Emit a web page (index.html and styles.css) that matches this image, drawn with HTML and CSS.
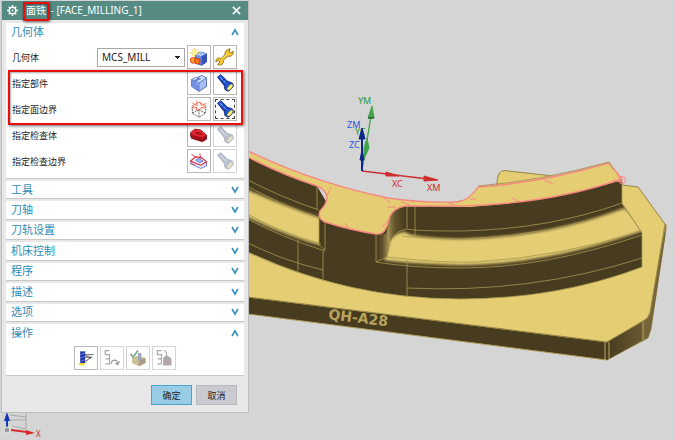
FILE: index.html
```
<!DOCTYPE html>
<html lang="zh-CN">
<head>
    <meta charset="UTF-8">
    <meta name="viewport" content="width=device-width, initial-scale=1.0">
    <title>面铣 - [FACE_MILLING_1]</title>
    <link rel="stylesheet" href="styles.css">
</head>
<body>
    <!-- Shared icons -->
    <svg class="sprite" aria-hidden="true">
        <symbol id="torch" viewBox="0 0 24 24">
            <path d="M3 5l4-3 8 8 6 2 1 4-6 6-4-2-1-5-4-5z" fill="#1b50cf" stroke="#0b1c6c"/>
            <path d="M6 5l8 8" stroke="#5f9bff" stroke-width="1.5"/>
            <path d="M11 14l4-4M8 11l3-4" stroke="#0b1c6c"/>
            <ellipse cx="18" cy="17" rx="2.5" ry="5" transform="rotate(42 18 17)" fill="#fff06a" stroke="#233f91"/>
        </symbol>
        <symbol id="torch-off" viewBox="0 0 24 24">
            <path d="M3 5l4-3 8 8 6 2 1 4-6 6-4-2-1-5-4-5z" fill="#b9becb" stroke="#adb1bc"/>
            <path d="M6 5l8 8" stroke="#d5dae6" stroke-width="1.5"/>
            <ellipse cx="18" cy="17" rx="2.5" ry="5" transform="rotate(42 18 17)" fill="#e2e0c6" stroke="#b9bbc0"/>
        </symbol>
        <symbol id="down" viewBox="0 0 8 8">
            <path d="M1 1l3 5 3-5" fill="none" stroke="#3c94bd" stroke-width="1.7"/>
        </symbol>
        <symbol id="up" viewBox="0 0 8 8">
            <path d="M1 7l3-5 3 5" fill="none" stroke="#3c94bd" stroke-width="1.7"/>
        </symbol>
    </svg>

    <!-- Graphics window -->
    <svg class="scene" viewBox="0 0 675 440" preserveAspectRatio="xMinYMin slice" role="img" aria-label="QH-A28">
        <defs>
            <filter id="soft" x="-10%" y="-20%" width="120%" height="140%"><feGaussianBlur stdDeviation="1.8"/></filter>
            <linearGradient id="fillet-in" x1="0" x2="1">
                <stop offset="0" stop-color="#483c20"/>
                <stop offset=".4" stop-color="#5d4f2b"/>
                <stop offset="1" stop-color="#cdb769"/>
            </linearGradient>
            <linearGradient id="fillet-out" x1="0" x2="1">
                <stop offset="0" stop-color="#9c8a4b"/>
                <stop offset=".4" stop-color="#62542d"/>
                <stop offset="1" stop-color="#483c20"/>
            </linearGradient>
            <linearGradient id="chamfer" x1="0" x2="1">
                <stop offset="0" stop-color="#483c20"/>
                <stop offset="1" stop-color="#6a5a31"/>
            </linearGradient>
            <clipPath id="ledges">
                <path d="M240 177Q282 198 319 210V247L325 251Q280 238 240 217Z"/>
                <path d="M622 204L642 233V236Q545 270 462 269Q410 268 376 263L387 240Q392 231 405 229L412 233Q440 236 462 236Q550 233 622 204Z"/>
            </clipPath>
        </defs>

        <!-- base plate -->
        <path d="M240 296L607 342L648 319L666 224V229L651 329L648 338L607 360L240 313Z" fill="#483c20" stroke="#ad9b55"/>
        <path d="M607 342L643 321V340L607 360Z" fill="url(#chamfer)"/>
        <path d="M643 321L648 318L666 224L665 238L651 329L648 338L643 340Z" fill="#74663a"/>
        <path d="M240 240V296L607 342L643 321Q648 319 650 313L665 224L638 187L553 176L508 171Q500 169 498 176L495 195Z" fill="#e5cd74" stroke="#958444"/>
        <path d="M605 342V360M609 342V359M643 322V340" stroke="#b9a65f" fill="none"/>

        <!-- part body -->
        <path d="M240 150L317 186L327 203L388 206L470 207Q550 201 622 180V204L642 233V267Q558 299 460 299Q345 299 240 248Z" fill="#483c20"/>
        <g clip-path="url(#ledges)">
            <path filter="url(#soft)" d="M230 182Q282 206 324 219L330 248Q280 235 230 208Z" fill="#e5cd74"/>
            <path filter="url(#soft)" d="M624 208L650 228Q548 265 462 265Q410 264 384 260L390 240Q396 232 405 232Q412 238 462 239Q550 237 624 208Z" fill="#e5cd74"/>
        </g>
        <path d="M376 234H386L389 222L392 238L387 257L376 262Z" fill="url(#fillet-in)"/>
        <path d="M388 222Q391 207 405 206V229Q394 232 390 242Z" fill="url(#fillet-out)"/>
        <path d="M622 203L642 233" fill="none" stroke="#9c8b4c"/>

        <!-- edges of the part -->
        <g fill="none" stroke="#a6974e" stroke-width=".8">
            <path d="M240 176Q282 198 319 210M240 182Q282 206 320 218M240 210Q280 233 321 244M240 215Q280 237 325 251M240 239Q280 260 323 270"/>
            <path d="M317 186V209M319 218V245L325 250M325 222V250M323 251V279M298 240V271"/>
            <path d="M376 233V262Q410 268 462 268Q545 268 642 235M376 262L387 257Q440 263 475 262Q560 257 642 231"/>
            <path d="M407 206V228M415 206V237M392 238Q396 231 407 229Q412 231 462 231Q550 229 622 203M402 236Q412 238 462 239Q550 236 625 209"/>
            <path d="M407 260V297M407 288Q530 294 642 258M622 180V203M642 233V267"/>
            <path d="M240 249Q345 299 460 299Q558 299 642 267"/>
        </g>

        <!-- machined face -->
        <path d="M240 147Q310 182 388 198Q420 203 457 202Q470 200 478 187Q540 183 609 163L622 179Q540 207 440 206L405 206Q394 208 390 216C387 226 386 235 376 234Q350 230 325 222Q317 218 320 211Q327 204 327 197Q325 189 317 186Q280 174 240 153Z" fill="#e5cd74" stroke="#f78882" stroke-width="1.4"/>
        <path d="M478 186Q540 181 609 162L614 170" fill="none" stroke="#aa9859"/>
        <g fill="none" stroke="#f78882">
            <path d="M331 188L326 197M384 198L391 203M387 207H396M345 223L350 230M388 221L382 227M401 202L410 205M447 202L454 205M512 198L520 202M543 179L553 184M470 199H476M613 180L622 182L617 174"/>
            <circle cx="622" cy="180" r="3.5"/>
        </g>
        <text class="engraving" transform="translate(328 319) rotate(7)">QH-A28</text>

        <!-- coordinate systems -->
        <g stroke="#43a34c" fill="#43a34c">
            <path d="M362 170L371 116" stroke-width="1.4"/>
            <path d="M372 106L368 118H374ZM367 138L364 148L364 159L369 148Z"/>
            <path d="M368 118H374" stroke="#143d19"/>
        </g>
        <g stroke="#cf2d2f" fill="#cf2d2f">
            <path d="M362 171L428 179" stroke-width="1.4"/>
            <path d="M438 180L424 176V181ZM399 176L386 172V176Z"/>
        </g>
        <g class="axis green">
            <text x="358" y="104">YM</text>
            <text x="355" y="135">YC</text>
        </g>
        <g stroke="#0d2789" fill="#0d2789">
            <path d="M362 171V130" stroke-width="2"/>
            <path d="M362 128L359 139H365ZM362 150L360 160H364Z"/>
        </g>
        <g class="axis blue">
            <text x="347" y="128">ZM</text>
            <text x="349" y="148">ZC</text>
        </g>
        <g class="axis red">
            <text x="392" y="187">XC</text>
            <text x="427" y="191">XM</text>
        </g>

        <!-- view triad -->
        <path d="M10 410L26 412V429L12 426M26 417L10 415M10 420H26" fill="none" stroke="#aaa"/>
        <path d="M7 429V415" stroke="#153cb8" stroke-width="2"/>
        <path d="M7 412L4 421H10Z" fill="#1237b5"/>
        <path d="M11 430L27 432" stroke="#d72a2c" stroke-width="2"/>
        <path d="M35 433L26 430V435Z" fill="#d72a2c"/>
        <circle cx="7" cy="430" r="3" fill="#999" stroke="#eee"/>
        <text class="triad-label" x="36" y="437">X</text>
    </svg>

    <form class="dialog">
        <header class="title-bar">
            <svg class="gear" viewBox="0 0 12 12">
                <circle cx="6" cy="6" r="3.6" fill="none" stroke="#fff" stroke-width="1.6"/>
                <path d="M6 0v2M6 10v2M0 6h2M10 6h2M2 2l1 1M9 9l1 1M10 2L9 3M3 9l-1 1" stroke="#fff" stroke-width="1.6"/>
                <circle cx="6" cy="6" r="1" fill="#fff"/>
            </svg>
            <h1><span class="operation">面铣</span> - [FACE_MILLING_1]</h1>
            <button type="button" class="close" aria-label="关闭">
                <svg viewBox="0 0 10 10"><path d="M1 1l8 8M9 1L1 9" stroke="#fff" stroke-width="1.8"/></svg>
            </button>
        </header>

        <section class="panel geometry">
            <h2>几何体 <svg class="arrow"><use href="#up"/></svg></h2>
            <div class="rows">
                <div class="row">
                    <label for="geometry">几何体</label>
                    <select id="geometry"><option>MCS_MILL</option></select>
                    <button type="button" class="tool" aria-label="新建几何体">
                        <svg viewBox="0 0 24 24">
                            <path d="M8 9l5-3 8 2v10l-6 4-7-3z" fill="#6d8de8" stroke="#223c9d"/>
                            <path d="M8 9l7 2 6-3-8-2z" fill="#a9c4fa"/><path d="M15 11v11l6-4V8z" fill="#3555bd"/>
                            <path d="M7 1v12M1 7h12M3 3l8 8M11 3l-8 8" stroke="#e3c02f"/>
                            <circle cx="7" cy="7" r="2.8" fill="#fff38a"/>
                            <circle cx="5" cy="16" r="3.5" fill="#ffa52c" stroke="#d83b0d"/>
                            <circle cx="10" cy="17" r="3.5" fill="#f67a1b" stroke="#c92f0a"/>
                        </svg>
                    </button>
                    <button type="button" class="tool" aria-label="编辑">
                        <svg viewBox="0 0 24 24">
                            <path d="M14 4l4-2-1 4 2 1 3-2c0 5-3 7-7 6l-5 5c1 4-3 7-7 5l3-3-2-2-3 2c0-5 4-6 6-4l5-5c0-2 0-4 2-5z" fill="#f4c52c" stroke="#8c6510"/>
                            <path d="M9 14l6-6" stroke="#fff09a"/>
                        </svg>
                    </button>
                </div>
                <div class="row">
                    <span class="name">指定部件</span>
                    <button type="button" class="tool" aria-label="指定部件">
                        <svg viewBox="0 0 24 24">
                            <path d="M3 8v8l9 6 9-6V6l-6-3-4 2v4l-3 1V6z" fill="#86a3ec" stroke="#4056a5"/>
                            <path d="M3 8l5-3 3 1v4l-3 1v3l4 2v6l-9-6z" fill="#7391e2"/>
                            <path d="M3 8l5-3 3 1-4 3zM11 5l4-2 6 3-9 6-4-2 6-3z" fill="#cfdeff" stroke="#5069b8" stroke-width=".7"/>
                            <path d="M12 12l9-6v10l-9 6z" fill="#a5bdf4" stroke="#5069b8" stroke-width=".7"/>
                        </svg>
                    </button>
                    <button type="button" class="tool" aria-label="显示部件"><svg><use href="#torch"/></svg></button>
                </div>
                <div class="row">
                    <span class="name">指定面边界</span>
                    <button type="button" class="tool" aria-label="指定面边界">
                        <svg viewBox="0 0 24 24">
                            <path d="M4 9v8l8 5 8-5V9M12 13v9M4 17l8-4 8 4" fill="none" stroke="#444" stroke-dasharray="2 1"/>
                            <path d="M4 8l8-4 8 4-8 5zM4 5l6 3-1-6M13 3l2 5 6-3M3 11l6-1v4M20 11l-6-1" fill="none" stroke="#ef6a50"/>
                        </svg>
                    </button>
                    <button type="button" class="tool focused" aria-label="显示面边界"><svg><use href="#torch"/></svg></button>
                </div>
                <div class="row">
                    <span class="name">指定检查体</span>
                    <button type="button" class="tool" aria-label="指定检查体">
                        <svg viewBox="0 0 24 24">
                            <path d="M2 9l5-4 7 1 7 6v5l-5 3-13-4-1-3z" fill="#a70d17" stroke="#740812"/>
                            <path d="M2 9l5-4 7 1 7 6-5 3-12-3z" fill="#db2630"/>
                            <path d="M8 8l5 1 4 2-4 1-5-2z" fill="#ad101b"/>
                        </svg>
                    </button>
                    <button type="button" class="tool off" aria-label="显示检查体" disabled><svg><use href="#torch-off"/></svg></button>
                </div>
                <div class="row">
                    <span class="name">指定检查边界</span>
                    <button type="button" class="tool" aria-label="指定检查边界">
                        <svg viewBox="0 0 24 24">
                            <path d="M2 12v3l12 6 7-3v-5" fill="#dce6ff" stroke="#5871d2"/>
                            <path d="M2 12l6-5 7 1 6 5-7 4z" fill="#fff" stroke="#d92836" stroke-width="1.4"/>
                            <path d="M8 11l4-2 5 3-4 2z" fill="#a8bfff" stroke="#4966dd"/>
                            <path d="M3 4l6 4M13 3l1 6M2 15l5 2" stroke="#d92836"/>
                        </svg>
                    </button>
                    <button type="button" class="tool off" aria-label="显示检查边界" disabled><svg><use href="#torch-off"/></svg></button>
                </div>
            </div>
        </section>

        <div class="collapsed">
            <section class="panel"><h2>工具 <svg class="arrow"><use href="#down"/></svg></h2></section>
            <section class="panel"><h2>刀轴 <svg class="arrow"><use href="#down"/></svg></h2></section>
            <section class="panel"><h2>刀轨设置 <svg class="arrow"><use href="#down"/></svg></h2></section>
            <section class="panel"><h2>机床控制 <svg class="arrow"><use href="#down"/></svg></h2></section>
            <section class="panel"><h2>程序 <svg class="arrow"><use href="#down"/></svg></h2></section>
            <section class="panel"><h2>描述 <svg class="arrow"><use href="#down"/></svg></h2></section>
            <section class="panel"><h2>选项 <svg class="arrow"><use href="#down"/></svg></h2></section>
        </div>

        <section class="panel">
            <h2>操作 <svg class="arrow"><use href="#up"/></svg></h2>
            <div class="actions">
                <button type="button" class="tool" aria-label="生成">
                    <svg viewBox="0 0 24 24">
                        <path d="M2 18h10l-3 3H5z" fill="#f2db39"/>
                        <path d="M5 4h6v14H5z" fill="#2435aa"/>
                        <path d="M5 8l6-2M5 12l6-2M5 16l6-2" stroke="#6c82dc"/>
                        <path d="M11 8h10M11 11h8l-8 5M11 9l7 3" fill="none" stroke="#444"/>
                    </svg>
                </button>
                <button type="button" class="tool off" aria-label="重播" disabled>
                    <svg viewBox="0 0 24 24">
                        <path d="M9 3H4v5h5v5H4M4 13v0M9 13v6H4" fill="none" stroke="#aaa" stroke-width="1.5"/>
                        <path d="M11 19c1-6 7-6 8 0M16 18l3 2 2-4" fill="none" stroke="#999" stroke-width="1.5"/>
                    </svg>
                </button>
                <button type="button" class="tool off" aria-label="确认" disabled>
                    <svg viewBox="0 0 24 24">
                        <path d="M5 12l7-3 9 3v6l-8 4-8-4z" fill="#cbbf93"/>
                        <path d="M13 14l8-2v6l-8 4z" fill="#ab9d87"/>
                        <path d="M12 6h4v9h-4z" fill="#a0a3bd"/>
                        <path d="M3 7l3 4 6-8" fill="none" stroke="#73a889" stroke-width="2"/>
                    </svg>
                </button>
                <button type="button" class="tool off" aria-label="列表" disabled>
                    <svg viewBox="0 0 24 24">
                        <path d="M9 3H4v5h5v5H4M9 13v6H4" fill="none" stroke="#aaa" stroke-width="1.5"/>
                        <path d="M11 12l4-4 6 5v8H11z" fill="#aaa"/>
                        <path d="M12 3c3 0 3 3 3 6M13 15h6M13 18h6" fill="none" stroke="#c49c9c" stroke-width="1.3"/>
                    </svg>
                </button>
            </div>
        </section>

        <footer class="buttons">
            <button type="submit" class="ok">确定</button>
            <button type="button">取消</button>
        </footer>

        <div class="mark mark-title"></div>
        <div class="mark mark-rows"></div>
    </form>
</body>
</html>
```
FILE: styles.css
```
* {
    box-sizing: border-box;
}

body {
    margin: 0;
    padding: 1px;
    min-height: 100vh;
    background-color: #d5d5d5;
    font-family: "Noto Sans", "Noto Sans CJK SC", sans-serif;
    font-size: 9px;
    color: #222;
    overflow: hidden;
}

button, select {
    font: inherit;
    color: inherit;
    margin: 0;
    padding: 0;
}

.sprite {
    position: absolute;
    width: 0;
    height: 0;
}

/* Graphics window */
.scene {
    position: absolute;
    top: 0;
    left: 0;
    width: 100%;
    height: 100%;
}

.axis {
    font-size: 9px;
}

.green { fill: #2c9b36; }
.blue { fill: #2456df; }
.red { fill: #cf2d2f; }

.triad-label {
    font-size: 8px;
    fill: #d72a2c;
}

.engraving {
    font-family: "DejaVu Sans", sans-serif;
    font-size: 14px;
    font-weight: bold;
    fill: #b9a45b;
}

/* Dialog */
.dialog {
    position: relative;
    width: 248px;
    padding: 0 4px 7px;
    background-color: #e8e8e8;
    border: 1px solid #bdbdbd;
    border-top: none;
}

.title-bar {
    display: flex;
    align-items: center;
    gap: 8px;
    height: 19px;
    margin: 0 -4px 3px;
    padding: 0 7px 0 5px;
    background-color: #568b83;
    color: #fff;
}

.gear {
    width: 11px;
    height: 11px;
}

h1 {
    flex: 1;
    margin: 0;
    font-size: 10px;
    font-weight: normal;
    line-height: 19px;
    white-space: nowrap;
}

.operation {
    margin-right: 2px;
}

.close {
    width: 9px;
    height: 9px;
    background: none;
    border: none;
}

.close svg, .tool svg {
    display: block;
    width: 100%;
    height: 100%;
}

.panel {
    padding: 0 5px;
    background-color: #fff;
    border-bottom: 1px solid #c8c8c8;
}

h2 {
    display: flex;
    align-items: center;
    justify-content: space-between;
    height: 18px;
    margin: 0;
    font-size: 11px;
    font-weight: normal;
    line-height: 18px;
    color: #2e8cb8;
}

.arrow {
    width: 8px;
    height: 8px;
}

.geometry {
    padding-bottom: 5px;
}

.rows {
    display: grid;
    gap: 2px;
    padding-top: 4px;
}

.row {
    display: flex;
    align-items: center;
    gap: 2px;
    padding-right: 2px;
}

.row label, .name {
    flex: 1;
    padding-left: 1px;
}

select {
    width: 91px;
    height: 19px;
    padding-left: 4px;
    font-size: 10px;
    border: 1px solid #a9a9a9;
    border-radius: 0;
    appearance: none;
    background-color: #fff;
    background-image: linear-gradient(to bottom left, #222 50%, transparent 50%), linear-gradient(to bottom right, #222 50%, transparent 50%);
    background-repeat: no-repeat;
    background-size: 3px 3px;
    background-position: right 7px center, right 4px center;
}

.row select {
    width: 88px;
}

.tool {
    width: 24px;
    height: 24px;
    padding: 1px;
    background-color: #fff;
    border: 1px solid #b9b9b9;
}

.tool.off {
    border-color: #d5d5d5;
}

.tool.focused {
    outline: 1px dashed #444;
    outline-offset: -3px;
}

.collapsed {
    display: flex;
    flex-direction: column;
    gap: 2px;
    min-height: 141px;
    margin: 2px 0;
}

.collapsed .panel {
    flex: 1;
}

.collapsed h2 {
    height: 17px;
}

.actions {
    display: flex;
    justify-content: center;
    gap: 2px;
    padding: 4px 0 5px;
}

.buttons {
    display: flex;
    justify-content: flex-end;
    gap: 4px;
    padding: 9px 7px 0 0;
}

.buttons button {
    width: 41px;
    height: 20px;
    background-color: #c9cbd0;
    border: 1px solid #b7b9bd;
}

.buttons .ok {
    background-color: #99cce6;
    border-color: #4ba4cb;
}

/* Red highlight frames */
.mark {
    position: absolute;
    border: 2px solid #e8100c;
    box-shadow: 1px 1px 3px #0009, inset 1px 1px 2px #0005;
    pointer-events: none;
}

.mark-title {
    top: 1px;
    left: 21px;
    width: 26px;
    height: 19px;
}

.mark-rows {
    top: 69px;
    left: 6px;
    right: 5px;
    height: 55px;
}
```
